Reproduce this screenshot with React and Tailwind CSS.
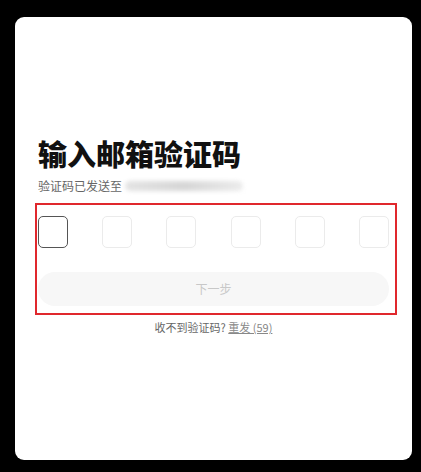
export default function App() {
  const font = { fontFamily: '"Noto Sans CJK SC", "Noto Sans", sans-serif' };
  return (
    <div className="w-[421px] h-[472px] bg-black pt-[17px] pl-[15px]" style={font}>
      <div className="relative w-[397px] h-[443px] bg-white rounded-[9px] px-[23px] pt-[118px]">
        <h1 className="text-[29px] leading-[36px] font-black text-[#111]">输入邮箱验证码</h1>
        <div className="mt-[7px] flex items-center text-[12px] leading-[16px] text-[#666]">
          <span>验证码已发送至</span>
          <span className="ml-[3px] w-[118px] h-[10px] rounded-full bg-gradient-to-r from-[#e4e4e4] via-[#d6d6d6] to-[#ececec] blur-[2px]" />
        </div>
        <div className="relative">
          <div className="mt-[22px] flex justify-between">
            <div className="w-[30px] h-[32px] rounded-[5px] border border-[#555]" />
            <div className="w-[30px] h-[32px] rounded-[5px] border border-[#ebebeb]" />
            <div className="w-[30px] h-[32px] rounded-[5px] border border-[#ebebeb]" />
            <div className="w-[30px] h-[32px] rounded-[5px] border border-[#ebebeb]" />
            <div className="w-[30px] h-[32px] rounded-[5px] border border-[#ebebeb]" />
            <div className="w-[30px] h-[32px] rounded-[5px] border border-[#ebebeb]" />
          </div>
          <button className="mt-[24px] w-full h-[34px] rounded-full bg-[#f7f7f7] text-[12px] text-[#c8c8c8] flex items-center justify-center">
            下一步
          </button>
          <div className="absolute left-[-3px] right-[-8px] top-[-13px] bottom-[-9px] border-2 border-[#e0282d] pointer-events-none" />
        </div>
        <div className="mt-[13px] text-center text-[11px] leading-[16px] text-[#666]">
          收不到验证码? <span className="underline text-[#888]">重发 (59)</span>
        </div>
      </div>
    </div>
  );
}
